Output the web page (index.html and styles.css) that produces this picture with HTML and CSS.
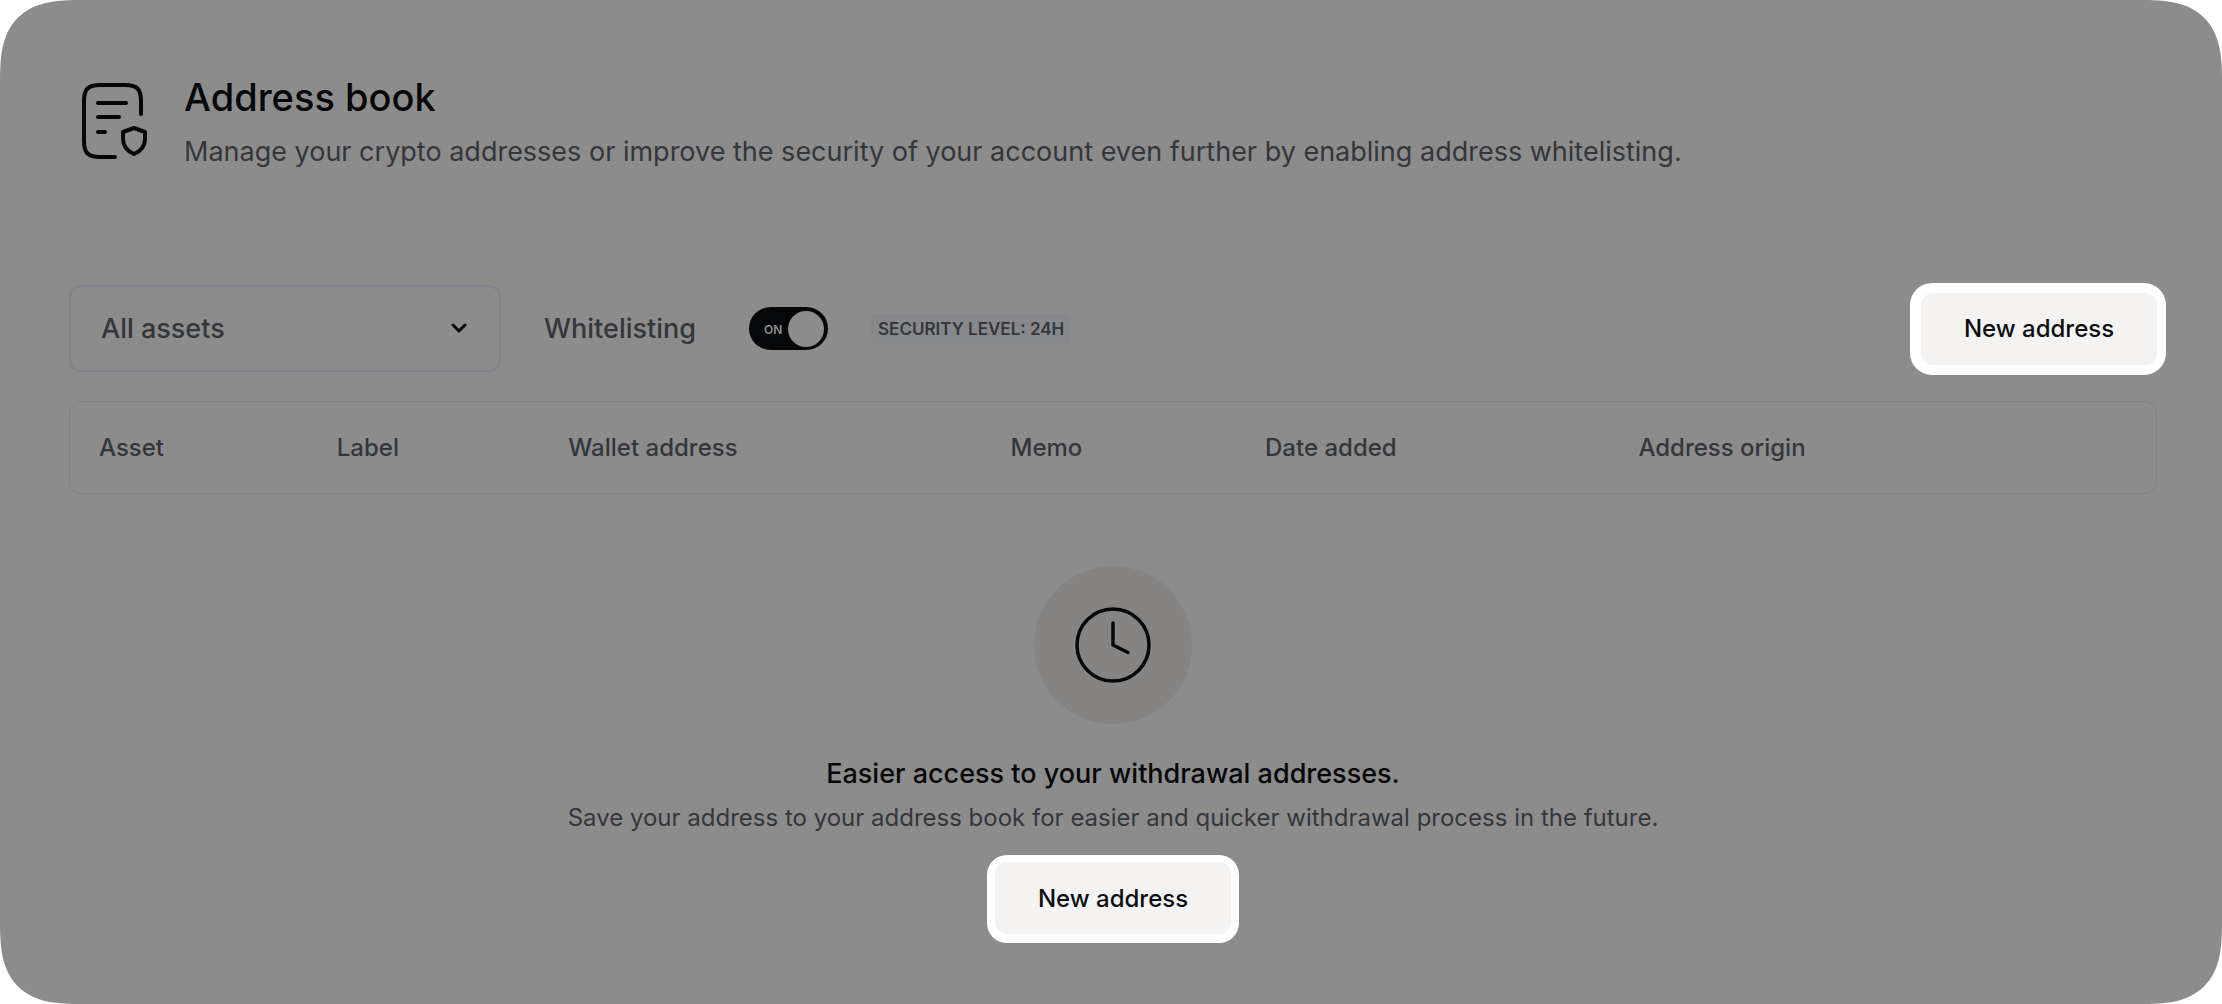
FILE: index.html
```html
<!DOCTYPE html>
<html lang="en">
<head>
    <meta charset="UTF-8">
    <meta name="viewport" content="width=device-width, initial-scale=1.0">
    <title>Address book</title>
    <link rel="stylesheet" href="styles.css">
</head>
<body>
    <main class="panel">
        <header class="page-header">
            <svg class="book-icon" viewBox="0 0 66 76" fill="none" stroke="currentColor" stroke-width="4" stroke-linecap="round" stroke-linejoin="round">
                <path d="M33 74H18C6 74 2 70 2 58V18C2 6 6 2 18 2H43C55 2 59 6 59 18V31"/>
                <path d="M16 20H44M16 34H37M16 49H23"/>
                <path d="M52 45L63 49V56C63 63 59 68 52 71C45 68 41 63 41 56V49Z"/>
            </svg>
            <div>
                <h1>Address book</h1>
                <p>Manage your crypto addresses or improve the security of your account even further by enabling address whitelisting.</p>
            </div>
        </header>

        <div class="toolbar">
            <div class="select-box">
                <select aria-label="Assets">
                    <option>All assets</option>
                </select>
                <svg class="chevron" viewBox="0 0 16 10" fill="none" stroke="currentColor" stroke-width="3" stroke-linecap="round" stroke-linejoin="round">
                    <path d="M2 2L8 8L14 2"/>
                </svg>
            </div>
            <label class="whitelist-label" for="whitelisting">Whitelisting</label>
            <div class="toggle">
                <input type="checkbox" id="whitelisting" checked>
                <span class="toggle-text">ON</span>
            </div>
            <span class="badge">SECURITY LEVEL: 24H</span>
            <button class="btn btn-top" type="button">New address</button>
        </div>

        <div class="table-box">
            <table>
                <thead>
                    <tr>
                        <th class="col-asset">Asset</th>
                        <th class="col-label">Label</th>
                        <th class="col-wallet">Wallet address</th>
                        <th class="col-memo">Memo</th>
                        <th class="col-date">Date added</th>
                        <th class="col-origin">Address origin</th>
                    </tr>
                </thead>
            </table>
        </div>

        <section class="empty">
            <div class="empty-icon">
                <svg viewBox="0 0 76 76" fill="none" stroke="currentColor" stroke-width="3.5" stroke-linecap="round" stroke-linejoin="round">
                    <circle cx="38" cy="38" r="36"/>
                    <path d="M38 16V38L53 45.500"/>
                </svg>
            </div>
            <h2>Easier access to your withdrawal addresses.</h2>
            <p>Save your address to your address book for easier and quicker withdrawal process in the future.</p>
            <button class="btn btn-bottom" type="button">New address</button>
        </section>
    </main>
</body>
</html>
```
FILE: styles.css
```css
* {
    box-sizing: border-box;
}

body {
    margin: 0;
    background-color: #fff;
    color: #060709;
    font-family: Inter, "Liberation Sans", sans-serif;
}

h1, h2, p {
    margin: 0;
}

.panel {
    min-height: 100vh;
    padding: 72px 65px 56px 69px;
    background-color: #8c8c8c;
    border-radius: 64px;
}

/* softer corners where the browser can draw them */
@supports (corner-shape: superellipse(1.5)) {
    .panel {
        border-radius: 82px;
        corner-shape: superellipse(1.5);
    }
}

/* Page title */
.page-header {
    display: flex;
    align-items: flex-start;
    gap: 36px;
    padding: 11px 0 0 13px;
}

.book-icon {
    flex: none;
    width: 66px;
    height: 76px;
}

.page-header h1 {
    margin-top: -11px;
    font-size: 38px;
    line-height: 50px;
    font-weight: 500;
}

.page-header p {
    margin-top: 10px;
    color: #33373c;
    font-size: 27px;
    line-height: 40px;
}

/* Filters and switch */
.toolbar {
    display: flex;
    align-items: center;
    margin-top: 113px;
}

.select-box {
    position: relative;
    width: 432px;
}

.select-box select {
    appearance: none;
    width: 100%;
    height: 87px;
    padding: 0 60px 0 30px;
    border: 2px solid #7f858a;
    border-radius: 12px;
    background: none;
    color: #33373c;
    font-family: inherit;
    font-size: 27px;
    font-weight: 500;
}

.chevron {
    position: absolute;
    top: 38px;
    right: 34px;
    width: 16px;
    height: 10px;
    pointer-events: none;
}

.whitelist-label {
    margin-left: 43px;
    color: #33373c;
    font-size: 27px;
    font-weight: 500;
}

.toggle {
    position: relative;
    width: 79px;
    height: 43px;
    margin-left: 53px;
}

.toggle input {
    appearance: none;
    display: flex;
    align-items: center;
    justify-content: flex-end;
    width: 100%;
    height: 100%;
    margin: 0;
    padding: 0 4px;
    border-radius: 22px;
    background-color: #060709;
    cursor: pointer;
}

.toggle input::before {
    content: "";
    width: 36px;
    height: 36px;
    border-radius: 50%;
    background-color: #8c8c8c;
}

.toggle input:not(:checked) {
    justify-content: flex-start;
}

.toggle-text {
    position: absolute;
    top: 15px;
    left: 15px;
    color: #8c8c8c;
    font-size: 12px;
    line-height: 16px;
    font-weight: 600;
    pointer-events: none;
}

.badge {
    margin-left: 43px;
    padding: 0 7px;
    border-radius: 6px;
    background-color: #87888b;
    color: #33373c;
    font-size: 17px;
    line-height: 30px;
    font-weight: 600;
}

.btn {
    width: 236px;
    height: 72px;
    padding: 0;
    border: none;
    border-radius: 12px;
    background-color: #f4f3f1;
    color: #0b0e11;
    font-family: inherit;
    font-size: 24px;
    font-weight: 500;
    cursor: pointer;
}

.btn-top {
    margin-left: auto;
    box-shadow: -1px 0 0 10px #fff;
}

.btn-bottom {
    margin-top: 26px;
    box-shadow: 0 1px 0 8px #fff;
}

/* Address table */
.table-box {
    margin-top: 29px;
    border: 1px solid #7f8386;
    border-radius: 12px;
}

table {
    width: 100%;
    border-collapse: collapse;
    table-layout: fixed;
}

th {
    height: 91px;
    padding: 0 0 0 29px;
    color: #33373c;
    font-size: 24px;
    font-weight: 500;
    text-align: left;
}

.col-asset {
    width: 11.4%;
}

.col-label {
    width: 11.1%;
}

.col-wallet {
    width: 21.2%;
}

.col-memo {
    width: 12.2%;
}

.col-date {
    width: 17.9%;
}

/* Empty list */
.empty {
    display: flex;
    flex-direction: column;
    align-items: center;
    margin-top: 72px;
    text-align: center;
}

.empty-icon {
    display: flex;
    align-items: center;
    justify-content: center;
    width: 158px;
    height: 158px;
    border-radius: 50%;
    background-color: #868482;
}

.empty-icon svg {
    width: 76px;
    height: 76px;
}

.empty h2 {
    margin-top: 30px;
    font-size: 27px;
    line-height: 40px;
    font-weight: 500;
}

.empty p {
    margin-top: 6px;
    color: #33373c;
    font-size: 24px;
    line-height: 36px;
}
```
